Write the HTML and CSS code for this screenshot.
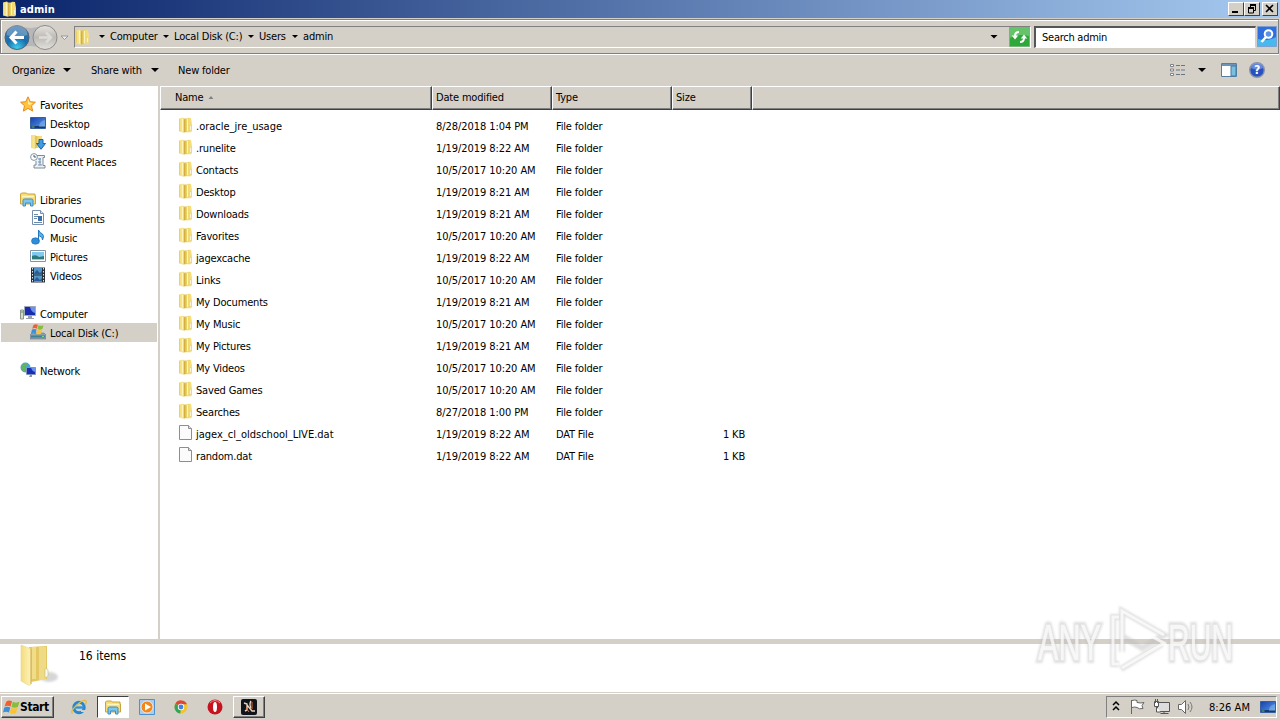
FILE: index.html
```html
<!DOCTYPE html>
<html lang="en">
<head>
  <meta charset="UTF-8">
  <meta name="viewport" content="width=device-width, initial-scale=1.0">
  <title>admin</title>
  <link rel="stylesheet" href="styles.css">
</head>
<body>
  <svg class="defs" width="0" height="0">
    <defs>
      <linearGradient id="gold" x1="0" x2="1"><stop offset="0" stop-color="#f3dc78"/><stop offset=".3" stop-color="#f7e896"/><stop offset=".45" stop-color="#d9b94c"/><stop offset=".6" stop-color="#efd668"/><stop offset="1" stop-color="#f5e183"/></linearGradient>
      <linearGradient id="goldBig" x1="0" x2="1"><stop offset="0" stop-color="#f4dc80"/><stop offset="1" stop-color="#fdf3b9"/></linearGradient>
      <linearGradient id="blue" x1="0" y1="0" x2="1" y2="1"><stop offset="0" stop-color="#163fae"/><stop offset="1" stop-color="#5b9de8"/></linearGradient>
      <radialGradient id="back" cx=".5" cy=".95" r=".9"><stop offset="0" stop-color="#3fd0f2"/><stop offset=".5" stop-color="#176eae"/><stop offset="1" stop-color="#4079ac"/></radialGradient>
      <linearGradient id="fwd" x1="0" y1="0" x2="0" y2="1"><stop offset="0" stop-color="#e6e4e0"/><stop offset=".5" stop-color="#bdbab5"/><stop offset="1" stop-color="#e4e2de"/></linearGradient>
      <filter id="soft" x="-20%" y="-20%" width="140%" height="140%"><feGaussianBlur stdDeviation="1.3"/></filter>
    </defs>
    <symbol id="folder" viewBox="0 0 16 16">
      <path d="M2 1.500L6 .5l1 1h3l1-.8 3 .3 1 6v7l-1 1.200H8l-1 .6-5-1.300z" fill="url(#gold)"/>
      <path d="M2.500 2v12" stroke="#ecd06c" fill="none"/>
      <path d="M7.500 2.500v12.500" stroke="#cfa93d" stroke-width=".8"/><path d="M5.500 2v12M10.500 2v12" stroke="#fdf4b6" fill="none"/>
      <path d="M12.500 8.500h2v5h-2z" fill="#fbf5d7" stroke="#e0c670" stroke-width=".5"/>
    </symbol>
    <symbol id="file" viewBox="0 0 16 16">
      <path d="M2.500.5h9l3 3v11h-12z" fill="#fbfbfb" stroke="#8e8e8e"/><path d="M11.500.5v3h3" fill="#ddd" stroke="#8e8e8e"/>
    </symbol>
    <symbol id="star" viewBox="0 0 16 16">
      <path d="M8 .8l2.200 4.900 5.200.5-3.900 3.600 1.200 5.300L8 12.400l-4.700 2.700 1.200-5.300L.6 6.200l5.200-.5z" fill="#ffc33e" stroke="#e98a1d"/>
      <path d="M8 3l1.300 3.500 3.200.5-2.700 2L8 8z" fill="#fff0a0"/>
    </symbol>
    <symbol id="desktop" viewBox="0 0 16 16">
      <path d="M.5 2.500h15v11H.5z" fill="url(#blue)" stroke="#355f9e"/><path d="M1 12h14" stroke="#173876" stroke-width="2"/><path d="M1.500 12h3" stroke="#67c15a"/><path d="M9 12q0-6 6-7v7z" fill="#9bd3f5" opacity=".4"/>
    </symbol>
    <symbol id="downloads" viewBox="0 0 16 16">
      <path d="M1 1h4l1 1h6v12H6l-1 1-4-1z" fill="url(#gold)"/><path d="M9 5.500h4v4h2.500L11 15.300 6.500 9.500H9z" fill="#3f9be2" stroke="#1a63ae"/>
    </symbol>
    <symbol id="recent" viewBox="0 0 16 16">
      <path d="M5 2.500h9.500v2H13v8h2v2.500H4V12h2V8" fill="#eef2f5" stroke="#7c8b96"/><path d="M8 6h3M8 9h3M8 12h4M10 5v7" stroke="#6d93b7"/><circle cx="4" cy="4" r="3.400" fill="#fff" stroke="#8596a4"/><path d="M4 2v2h2" fill="none" stroke="#456"/>
    </symbol>
    <symbol id="libraries" viewBox="0 0 16 16">
      <path d="M.5 3l1-1h5l1 1h7.500v2h.5v8H.5z" fill="#f5dc75" stroke="#cba43a"/><path d="M2 5.500h12" stroke="#fff6c0" stroke-width="1.500"/><path d="M3 15V9.500q0-1.500 1.500-1.500h7q1.500 0 1.500 1.500V15h-2.500v-3h-5v3z" fill="#7dc5ec" stroke="#3f8fc4"/>
    </symbol>
    <symbol id="documents" viewBox="0 0 16 16">
      <path d="M2.500.5h8l3 3v11h-11z" fill="#fff" stroke="#7690ad"/><path d="M10.500.5v3h3" fill="#dde8f3" stroke="#7690ad"/><path d="M4 4.500h4M4 6.500h4M4 8.500h3M4 12.500h8" stroke="#6c8aa8"/><path d="M8 6h4v5H8z" fill="#3c6fa8"/>
    </symbol>
    <symbol id="music" viewBox="0 0 16 16">
      <ellipse cx="5.500" cy="12" rx="4" ry="3.200" fill="#2c8fdc" stroke="#1b6ab3" stroke-width=".6"/><path d="M8.500 12V1q1 3 4 4 2 2 0 6 0-4-3-4" fill="#55b4ee" stroke="#2577bd"/>
    </symbol>
    <symbol id="pictures" viewBox="0 0 16 16">
      <path d="M.5 2.500h15v11H.5z" fill="#fff" stroke="#8296a8"/><path d="M2 4h12v8H2z" fill="#83c8ee"/><path d="M2 8q4-2 7 1l5-1v4H2z" fill="#2e7a78"/><path d="M2 11h12v1H2z" fill="#94cde0"/>
    </symbol>
    <symbol id="videos" viewBox="0 0 16 16">
      <path d="M1 .5h14v15H1z" fill="#2a3038"/><path d="M4 1h8v6.500H4zM4 8.500h8V15H4z" fill="#5197c8"/><path d="M5 5l2-2 3 3 2-2v3H4zM5 12l2-2 3 3 2-2v3H4z" fill="#2b5b98"/><path d="M2.500 1v14M13.500 1v14" stroke="#dfe7ee" stroke-dasharray="1.500 1.500"/>
    </symbol>
    <symbol id="computer" viewBox="0 0 16 16">
      <path d="M.5 5h3v9h-3z" fill="#d3dcc8" stroke="#8a948a"/><path d="M4.500 1.500h11v9h-11z" fill="#1a2cae" stroke="#9fa8bd"/><path d="M10 2h5v6q-4-1-5-6z" fill="#6d91e8"/><path d="M8 11h4v2h2v1H6v-1h2z" fill="#9aa1ae"/><path d="M1 7h2" stroke="#4c9e48"/>
    </symbol>
    <symbol id="flag" viewBox="0 0 16 16">
      <path d="M3 2.500q2.500-2 5.500-.3L7.200 7Q4.500 5.500 1.500 7z" fill="#ee6034"/><path d="M9.200 2.700q2.800 1.500 6.300 0L14 7.500q-3 1.400-6 0z" fill="#86bd3d"/><path d="M1.200 8q3-1.500 5.700 0l-1.300 4.800Q3 11.300 0 12.800z" fill="#3b8fd9"/><path d="M7.700 8.300q3 1.400 6 0l-1.400 4.900q-3 1.400-6 0z" fill="#fac332"/>
    </symbol>
    <symbol id="disk" viewBox="0 0 16 16">
      <path d="M2 9h12l2 2v4H0v-4z" fill="#8aa0ab" stroke="#657b88" stroke-width=".6"/><path d="M1 12.500h14" stroke="#3f8197" stroke-width="2"/><path d="M12 12.500h2" stroke="#79e07a"/><use href="#flag" x="1" y="-1" width="13" height="13"/>
    </symbol>
    <symbol id="network" viewBox="0 0 16 16">
      <circle cx="5.500" cy="5.500" r="5" fill="#49a5d5"/><path d="M2 3q3-3 6-1L5 5l2 2-3 3Q0 7 2 3z" fill="#67b35a"/><path d="M6.500 5.500h9v7h-9z" fill="#182fb5" stroke="#8093bd"/><path d="M11 6h4v4q-3-1-4-4z" fill="#6c92ea"/><path d="M10 13h2v2H9z" fill="#8c95a5"/>
    </symbol>
  </svg>

  <div class="window">
    <header class="titlebar">
      <svg class="icon"><use href="#folder"/></svg>
      <span class="title">admin</span>
      <div class="controls">
        <button><svg width="14" height="12"><path d="M3 9h6" stroke="#000" stroke-width="2"/></svg></button>
        <button><svg width="14" height="12"><path d="M5.500 1v3M10.500 2v5.500H8M3.500 5v5h5V5" fill="none" stroke="#000"/><path d="M5 2h6M3 5h6" stroke="#000" stroke-width="2"/></svg></button>
        <button class="close"><svg width="14" height="12"><path d="M3 2l7 7M10 2L3 9" stroke="#000" stroke-width="1.600"/></svg></button>
      </div>
    </header>

    <div class="navbar">
      <svg class="nav-buttons" width="70" height="32" viewBox="0 0 70 32">
        <path d="M14 4Q30 10 44 4v24q-14-6-30 0z" fill="#b5b7ba"/>
        <circle cx="16" cy="16.500" r="12" fill="url(#back)" stroke="#53626f"/>
        <path d="M5.500 14A10.500 10.500 0 0 1 26.500 14Q16 18 5.500 14z" fill="#fff" opacity=".25"/>
        <path d="M15.500 10.500L10 16.500l5.500 6M10 16.500h13" fill="none" stroke="#fff" stroke-width="3"/>
        <circle cx="44" cy="16.500" r="12" fill="url(#fwd)" stroke="#8b8b8b"/>
        <path d="M45 11.500l5 5-5 5M50 16.500H38" fill="none" stroke="#dddbd7" stroke-width="2.500"/>
        <path d="M60 15h7L63.500 18.500z" fill="#eee" stroke="#888" stroke-width=".8"/>
      </svg>
      <div class="address">
        <svg class="icon"><use href="#folder"/></svg>
        <i class="arrow small"></i><span class="c1">Computer</span>
        <i class="arrow small"></i><span class="c2">Local Disk (C:)</span>
        <i class="arrow small"></i><span class="c3">Users</span>
        <i class="arrow small"></i><span>admin</span>
        <i class="arrow drop"></i>
        <svg class="refresh" width="21" height="20"><path d="M.5.500h20v19H.5z" fill="#2fa83a" stroke="#74b878"/><path d="M1 1h19v8Q10 6 1 11z" fill="#8bd58b" opacity=".6"/><path d="M10 5Q6 5 6 9M11 15q4 0 4-4" stroke="#fff" stroke-width="2" fill="none"/><path d="M2.800 8.500h6.400L6 12.500zM11.800 11.500h6.400L15 7.500z" fill="#fff"/></svg>
      </div>
      <div class="search">Search admin</div>
      <svg class="search-btn" width="20" height="21"><path d="M.5.500h19v20H.5z" fill="#2f6fdd" stroke="#7f9fd0"/><path d="M1 13q9 3 18-2v9H1z" fill="#46b9ee"/><circle cx="11.500" cy="8" r="3.800" fill="#5b91e8" stroke="#fff" stroke-width="2"/><path d="M9 11l-4.500 5" stroke="#fff" stroke-width="2.600"/></svg>
    </div>

    <div class="toolbar">
      <span class="organize">Organize</span><i class="arrow"></i>
      <span class="share">Share with</span><i class="arrow"></i>
      <span class="newfolder">New folder</span>
      <div class="tools">
        <svg width="16" height="14"><path d="M.5 1.500h3v2h-3zM.5 6h3v2h-3zM.5 10.500h3v2h-3z" fill="#fff" stroke="#7b8288"/><path d="M6 2.500h4m1 0h4M6 7h4m1 0h4M6 11.500h4m1 0h4" stroke="#687787"/></svg>
        <i class="arrow"></i>
        <svg width="16" height="14"><path d="M.5.500h15v13H.5z" fill="#fff" stroke="#557ea4"/><path d="M1 2h14" stroke="#6d93b8" stroke-width="2"/><path d="M10 3h5v10h-5z" fill="#79bfe0" stroke="#48789b"/></svg>
        <svg width="16" height="16"><circle cx="8" cy="8" r="7.300" fill="#2850c0" stroke="#8794aa" stroke-width="1.400"/><path d="M2 6a6 5 0 0 1 12 0q-6 3-12 0z" fill="#8ba9ee" opacity=".6"/><text x="8" y="12.300" text-anchor="middle" class="q">?</text></svg>
      </div>
    </div>

    <main>
      <nav id="tree"></nav>
      <section class="files">
        <div class="row head"><span class="name">Name <i class="sort"></i></span><span>Date modified</span><span>Type</span><span>Size</span><span></span></div>
        <div id="list"></div>
      </section>
    </main>

    <footer class="details">
      <svg width="40" height="44" viewBox="0 0 40 44">
        <ellipse cx="29" cy="33" rx="9" ry="5" fill="#b9bdbb" opacity=".6" filter="url(#soft)"/>
        <path d="M9 3l18-1v33l-16 3z" fill="#e4c763"/><path d="M12 3h4v32h-4z" fill="#f1dd88"/>
        <path d="M1 1l10 4v35q-1 2-3 1l-7-4z" fill="url(#goldBig)" stroke="#ead486" stroke-width=".6"/><path d="M11 5v35" stroke="#cfaf50"/>
        <path d="M19 3h7v33h-7z" fill="#efdb86"/><path d="M25 25q3-1 3 1v6l-3 2z" fill="#f9fbf2" stroke="#c7bd74" stroke-width=".6"/>
      </svg>
      <span>16 items</span>
    </footer>
  </div>

  <div class="taskbar">
    <button class="start"><svg width="17" height="17"><use href="#flag"/></svg>Start</button>
    <span class="task"><svg class="icon"><circle cx="8" cy="8.500" r="5.200" fill="none" stroke="#2287d6" stroke-width="3"/><path d="M4 8.500h9" stroke="#2a93dc" stroke-width="2.300"/><path d="M10 12h5" stroke="#d4d0c8" stroke-width="2"/><path d="M1.500 14.500Q-1 12 6 6T15 2q1 1-1 4" fill="none" stroke="#e5bd35" stroke-width="1.300"/></svg></span>
    <span class="task active"><svg class="icon"><use href="#libraries"/></svg></span>
    <span class="task"><svg class="icon"><path d="M.5.500h15v15H.5z" fill="#a8cdee" stroke="#4f91cc"/><circle cx="8" cy="8" r="6" fill="#f4871c" stroke="#fff" stroke-width=".7"/><path d="M6 4.500L12 8l-6 3.500z" fill="#fff"/></svg></span>
    <span class="task"><svg class="icon"><circle cx="8" cy="8" r="6.500" fill="#f0c52e"/><path d="M8 8L2.400 4.700A6.500 6.500 0 0 1 14 5.200H8z" fill="#dd4639"/><path d="M8 8L2.400 4.700A6.500 6.500 0 0 0 7.300 14.500z" fill="#35a455"/><circle cx="8" cy="8" r="3.200" fill="#fff"/><circle cx="8" cy="8" r="2.400" fill="#4381e5"/></svg></span>
    <span class="task"><svg class="icon"><ellipse cx="8" cy="8" rx="7.500" ry="7.500" fill="#c51420"/><path d="M3 4q5-5 10 0" stroke="#f08a8a" fill="none"/><ellipse cx="8" cy="8" rx="2" ry="5" fill="#fff"/></svg></span>
    <span class="task open"><svg class="icon"><rect width="16" height="16" rx="2" fill="#10141b"/><path d="M3 4l3 1v6l-2 1M6 6l5 6h3M10 2q-2 3 0 7" fill="none" stroke="#e9d3bd" stroke-width="1.400"/><path d="M11 3v7M5 9l3 4" stroke="#e4702c"/></svg></span>
    <div class="tray">
      <svg width="90" height="20" viewBox="0 0 90 20">
        <path d="M6 8l3-3 3 3M6 13l3-3 3 3" fill="none" stroke="#000" stroke-width="1.500"/>
        <path d="M24.500 3v14M25 3.500q3-1 5 0v2q4 1 7 0l-2 3 1 3q-4 1-6-1-2-1-5 0" fill="#fff" stroke="#666"/>
        <path d="M50.500 5.500h12v9h-12z" fill="#ddd" stroke="#555"/><path d="M53.500 16.500h8M57 15v2M48.500 2v4M50.500 2v4M47.500 4.500h4v5h-4zM49.500 10v5h4" fill="#fff" stroke="#555"/>
        <path d="M71.500 7.500h3l4-4v13l-4-4h-3z" fill="#fff" stroke="#666"/><path d="M81 7q2 3 0 6M83 5q4 5 0 10" fill="none" stroke="#777"/>
      </svg>
      <span>8:26 AM</span>
      <svg class="icon"><use href="#desktop"/></svg>
    </div>
  </div>

  <svg class="watermark" width="250" height="90" viewBox="0 0 250 90">
    <g class="shadow" filter="url(#soft)">
      <text x="8" y="60" textLength="63" lengthAdjust="spacingAndGlyphs">ANY</text>
      <text x="138" y="60" textLength="65" lengthAdjust="spacingAndGlyphs">RUN</text>
      <path d="M89 17h-6v47h6M92 52V11l42 24-22 13-20-12M91 69l41-25"/>
    </g>
    <g class="front">
      <text x="8" y="60" textLength="63" lengthAdjust="spacingAndGlyphs">ANY</text>
      <text x="138" y="60" textLength="65" lengthAdjust="spacingAndGlyphs">RUN</text>
      <path d="M89 17h-6v47h6M92 58V11l42 24M106 28l28 15-42 25"/>
    </g>
  </svg>

  <script>
    const tree = [
      ['star', 'Favorites'], ['desktop', 'Desktop', 1], ['downloads', 'Downloads', 1], ['recent', 'Recent Places', 1], null,
      ['libraries', 'Libraries'], ['documents', 'Documents', 1], ['music', 'Music', 1], ['pictures', 'Pictures', 1], ['videos', 'Videos', 1], null,
      ['computer', 'Computer'], ['disk', 'Local Disk (C:)', 1, 1], null,
      ['network', 'Network']
    ];
    const files = [
      ['.oracle_jre_usage', '8/28/2018 1:04 PM'],
      ['.runelite', '1/19/2019 8:22 AM'],
      ['Contacts', '10/5/2017 10:20 AM'],
      ['Desktop', '1/19/2019 8:21 AM'],
      ['Downloads', '1/19/2019 8:21 AM'],
      ['Favorites', '10/5/2017 10:20 AM'],
      ['jagexcache', '1/19/2019 8:22 AM'],
      ['Links', '10/5/2017 10:20 AM'],
      ['My Documents', '1/19/2019 8:21 AM'],
      ['My Music', '10/5/2017 10:20 AM'],
      ['My Pictures', '1/19/2019 8:21 AM'],
      ['My Videos', '10/5/2017 10:20 AM'],
      ['Saved Games', '10/5/2017 10:20 AM'],
      ['Searches', '8/27/2018 1:00 PM'],
      ['jagex_cl_oldschool_LIVE.dat', '1/19/2019 8:22 AM', '1 KB'],
      ['random.dat', '1/19/2019 8:22 AM', '1 KB']
    ];

    document.getElementById('tree').innerHTML = tree.map(t => t ? `
      <div class="node ${t[2] ? 'child' : ''} ${t[3] ? 'selected' : ''}">
        <svg class="icon"><use href="#${t[0]}"/></svg><span>${t[1]}</span>
      </div>` : '<div class="node"></div>').join('');

    document.getElementById('list').innerHTML = files.map(f => `
      <div class="row">
        <span class="name ${f[0].includes('_') ? 'wide' : ''}"><svg class="icon"><use href="#${f[2] ? 'file' : 'folder'}"/></svg>${f[0]}</span>
        <span class="date">${f[1]}</span>
        <span>${f[2] ? 'DAT File' : 'File folder'}</span>
        <span class="size">${f[2] || ''}</span>
      </div>`).join('');
  </script>
</body>
</html>
```
FILE: styles.css
```css
* {
  box-sizing: border-box;
}
body {
  margin: 0;
  width: 1280px;
  height: 720px;
  overflow: hidden;
  display: flex;
  flex-direction: column;
  font-family: Tahoma, "DejaVu Sans Condensed", "DejaVu Sans", sans-serif;
  font-stretch: condensed;
  font-size: 11px;
  letter-spacing: -0.18px;
  color: #000;
  background: #d4d0c8;
  white-space: nowrap;
}
svg {
  display: block;
  flex: none;
}
.defs {
  position: absolute;
}
.icon {
  width: 16px;
  height: 16px;
}
.window {
  height: 692px;
  display: flex;
  flex-direction: column;
}
.titlebar {
  height: 18px;
  flex: none;
  display: flex;
  align-items: center;
  padding: 0 2px 0 1px;
  background: linear-gradient(to right, #0a246a, #a6caf0);
}
.title {
  margin-left: 3px;
  color: #fff;
  font-weight: bold;
  letter-spacing: 0.1px;
}
.controls {
  display: flex;
  margin-left: auto;
}
.controls button {
  width: 16px;
  height: 14px;
  padding: 0;
  background: #d4d0c8;
  border: 1px solid;
  border-color: #fff #404040 #404040 #fff;
}
.controls .close {
  margin-left: 2px;
}
.navbar {
  height: 35px;
  flex: none;
  margin: 1px 1px 0 0;
  display: flex;
  align-items: center;
  border: 1px solid #808080;
  box-shadow: inset 1px 1px #fff, 0 1px #fff;
}
.address {
  width: 957px;
  height: 22px;
  margin-left: 3px;
  display: flex;
  align-items: center;
  border-top: 1px solid #808080;
  border-left: 1px solid #808080;
  border-bottom: 1px solid #fff;
  border-right: 1px solid #fff;
}
.address .icon {
  margin-left: -1px;
}
.c1 {
  width: 48px;
}
.c2 {
  width: 69px;
}
.c3 {
  width: 28px;
}
.arrow {
  width: 8px;
  height: 4px;
  background: #000;
  clip-path: polygon(0 0, 100% 0, 50% 100%);
}
.small {
  width: 6px;
  height: 3px;
  margin: 0 5px;
}
.address .icon + .small {
  margin-left: 9px;
}
.drop {
  margin-left: auto;
}
.refresh {
  margin: 0 0 0 11px;
}
.search {
  width: 222px;
  height: 22px;
  margin-left: 3px;
  padding: 3px 0 0 7px;
  line-height: 15px;
  letter-spacing: -0.25px;
  background: #fff;
  border: 2px solid;
  border-width: 2px 1px 1px 2px;
  padding: 2px 0 0 6px;
  border-color: #555 #d4d0c8 #fff #555;
}
.search-btn {
  margin-left: 1px;
}
.toolbar {
  height: 31px;
  flex: none;
  margin-top: 1px;
  display: flex;
  align-items: center;
  padding-left: 12px;
  padding-bottom: 1px;
}
.organize {
  width: 51px;
}
.share {
  width: 60px;
  margin-left: 20px;
}
.newfolder {
  margin-left: 19px;
}
.tools {
  margin-left: auto;
  display: flex;
  align-items: center;
  padding-right: 15px;
}
.tools .arrow {
  margin: 0 15px 0 12px;
}
.tools svg:last-child {
  margin-left: 12px;
}
.q {
  fill: #fff;
  font-size: 12px;
  font-weight: bold;
}
main {
  flex: 1;
  display: flex;
  border-bottom: 5px solid #d4d0c8;
}
#tree {
  width: 158px;
  padding: 9px 1px 0;
  background: #fff;
}
.node {
  height: 19px;
  display: flex;
  align-items: center;
  padding-left: 19px;
}
.node.child {
  padding-left: 29px;
}
.node .icon {
  margin-top: -1px;
}
.node span {
  margin: 1px 0 0 4px;
}
.selected {
  background: #d4d0c8;
}
.files {
  flex: 1;
  margin-left: 2px;
  background: #fff;
}
.row {
  height: 22px;
  display: grid;
  grid-template-columns: 272px 120px 120px 80px 1fr;
  align-items: center;
}
.row > span {
  padding-left: 4px;
}
.row > .date {
  letter-spacing: -0.07px;
}
.row > .name {
  display: flex;
  align-items: center;
  padding-left: 17px;
}
.row > .wide {
  letter-spacing: 0;
}
.name .icon {
  margin: -2px 3px 0 0;
}
.row > .size {
  padding-right: 7px;
  text-align: right;
}
.head {
  height: 23px;
  align-items: stretch;
  background: #d4d0c8;
}
.head > span {
  padding-left: 3px;
  line-height: 22px;
  border: 1px solid;
  border-color: #fff #404040 #404040 #fff;
  box-shadow: inset -1px -1px #808080;
}
.head > .name {
  padding-left: 14px;
}
.sort {
  width: 5px;
  height: 3px;
  margin: -1px 0 0 5px;
  background: #808080;
  clip-path: polygon(50% 0, 100% 100%, 0 100%);
}
#list {
  padding-top: 6px;
}
.details {
  height: 48px;
  flex: none;
  display: flex;
  padding-left: 20px;
  background: #fff;
  font-size: 12px;
  letter-spacing: 0;
}
.details span {
  margin: 5px 0 0 19px;
}
.taskbar {
  height: 28px;
  display: flex;
  align-items: center;
  padding: 1px 3px 0 1px;
  border-top: 1px solid #d4d0c8;
  box-shadow: inset 0 1px #fff;
}
.start {
  width: 53px;
  height: 22px;
  display: flex;
  align-items: center;
  margin-right: 9px;
  padding: 0 0 0 1px;
  font: bold 12px "DejaVu Sans Condensed", "DejaVu Sans", sans-serif;
  font-stretch: condensed;
  letter-spacing: -0.4px;
  background: #d4d0c8;
  border: 1px solid;
  border-color: #fff #404040 #404040 #fff;
  box-shadow: inset -1px -1px #808080;
}
.start svg {
  margin: 1px 0 0;
}
.task {
  width: 32px;
  height: 22px;
  margin-right: 2px;
  display: flex;
  align-items: center;
  justify-content: center;
}
.active {
  background: #fff;
  border: 1px solid;
  border-color: #404040 #fff #fff #404040;
}
.open {
  border: 1px solid;
  border-color: #fff #404040 #404040 #fff;
  box-shadow: inset -1px -1px #808080;
}
.tray {
  width: 171px;
  height: 22px;
  margin-left: auto;
  display: flex;
  align-items: center;
  border: 1px solid;
  border-color: #808080 #fff #fff #808080;
}
.tray span {
  margin-left: 12px;
  letter-spacing: 0.05px;
}
.tray .icon {
  margin-left: auto;
}
/* sits over the file list and the details pane */
.watermark {
  position: absolute;
  left: 1030px;
  top: 600px;
  letter-spacing: 0;
}
.watermark text {
  font: 50px "Liberation Sans Narrow", "Liberation Sans", sans-serif;
}
.shadow {
  fill: none;
  stroke: #bbb;
  stroke-width: 6;
  opacity: 0.45;
}
.front {
  fill: none;
  stroke: #fff;
  stroke-width: 3;
  opacity: 0.75;
}
.front text {
  fill: #fff;
  stroke-width: 0.5;
}
```
